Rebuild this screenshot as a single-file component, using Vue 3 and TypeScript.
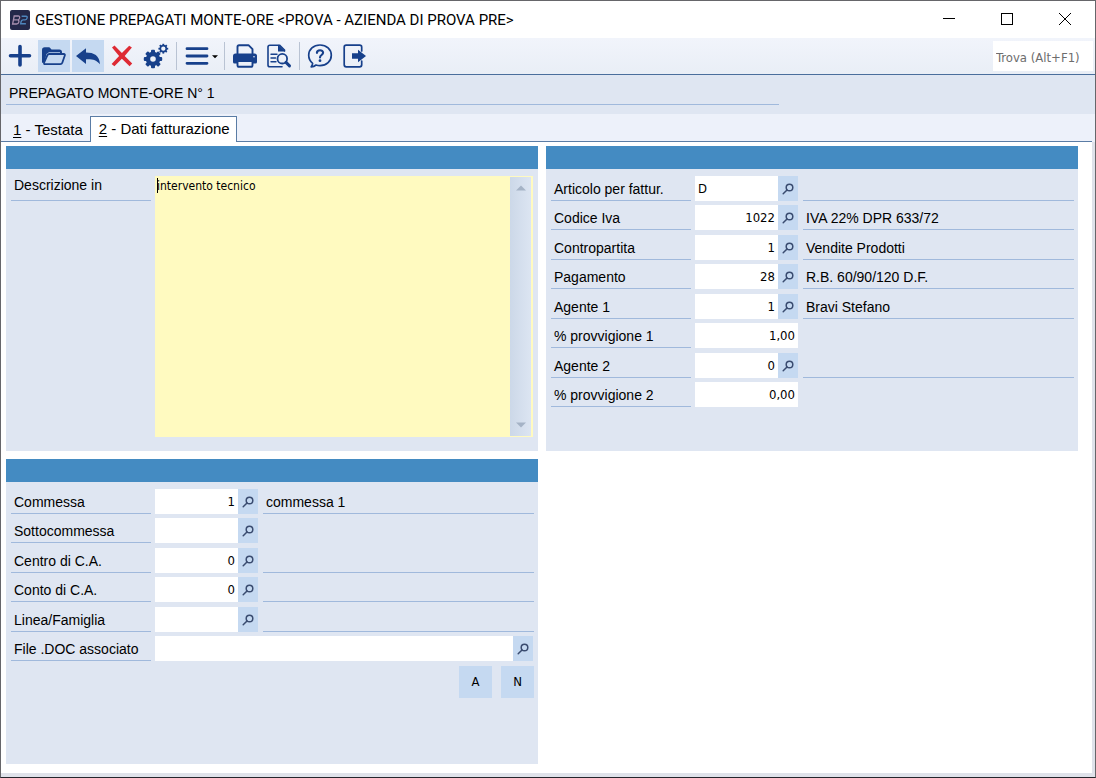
<script setup lang="ts">
import { ref } from 'vue'

interface Field {
  id: string
  label: string
  value: string
  align?: 'left' | 'right'
  lookup: boolean
  description?: string
  wide?: boolean
}

const billing = ref<Field[]>([
  { id: 'articolo', label: 'Articolo per fattur.', value: 'D', align: 'left', lookup: true, description: '' },
  { id: 'iva', label: 'Codice Iva', value: '1022', lookup: true, description: 'IVA 22% DPR 633/72' },
  { id: 'contropartita', label: 'Contropartita', value: '1', lookup: true, description: 'Vendite Prodotti' },
  { id: 'pagamento', label: 'Pagamento', value: '28', lookup: true, description: 'R.B. 60/90/120 D.F.' },
  { id: 'agente1', label: 'Agente 1', value: '1', lookup: true, description: 'Bravi Stefano' },
  { id: 'provv1', label: '% provvigione 1', value: '1,00', lookup: false },
  { id: 'agente2', label: 'Agente 2', value: '0', lookup: true, description: '' },
  { id: 'provv2', label: '% provvigione 2', value: '0,00', lookup: false },
])

const order = ref<Field[]>([
  { id: 'commessa', label: 'Commessa', value: '1', lookup: true, description: 'commessa 1' },
  { id: 'sottocommessa', label: 'Sottocommessa', value: '', lookup: true },
  { id: 'centro', label: 'Centro di C.A.', value: '0', lookup: true, description: '' },
  { id: 'conto', label: 'Conto di C.A.', value: '0', lookup: true, description: '' },
  { id: 'linea', label: 'Linea/Famiglia', value: '', lookup: true, description: '' },
  { id: 'file', label: 'File .DOC associato', value: '', align: 'left', lookup: true, wide: true },
])

const note = ref('intervento tecnico')
const search = ref('')
const teeth = [0, 45, 90, 135, 180, 225, 270, 315]
</script>

<template>
  <div class="window">
    <header class="titlebar">
      <svg class="app-icon" viewBox="0 0 20 20" aria-hidden="true">
        <rect width="20" height="20" rx="2" fill="#242849" />
        <path d="M4.2 6H8.2Q10 6 9.600 8Q9.300 9.700 7.600 9.900Q9.300 10.200 8.800 12.200Q8.400 14 6.400 14H2.600ZM4 9.900H7.400" fill="none" stroke="#a78fae" stroke-width="1.300" />
        <path d="M11.600 6.200H16Q17.500 6.200 17.100 8Q16.800 9.700 15 9.900H13Q11.400 10 11 12L10.700 13.800H15.900" fill="none" stroke="#4f86bd" stroke-width="1.400" />
      </svg>
      <h1 class="title">GESTIONE PREPAGATI MONTE-ORE &lt;PROVA - AZIENDA DI PROVA PRE&gt;</h1>
      <div class="window-buttons">
        <button type="button" aria-label="Riduci a icona">
          <svg viewBox="0 0 14 14"><path d="M1 6.500H13" /></svg>
        </button>
        <button type="button" aria-label="Ingrandisci">
          <svg viewBox="0 0 14 14"><rect x="1.500" y="1.500" width="11" height="11" /></svg>
        </button>
        <button type="button" aria-label="Chiudi">
          <svg viewBox="0 0 14 14"><path d="M1 1L13 13M13 1L1 13" /></svg>
        </button>
      </div>
    </header>

    <div class="toolbar" role="toolbar">
      <button type="button" class="tool" aria-label="Nuovo">
        <svg viewBox="0 0 32 32"><path d="M16 6.500V25M6.500 15.800H25.500" class="line" stroke-width="3.600" /></svg>
      </button>
      <button type="button" class="tool active" aria-label="Apri">
        <svg viewBox="0 0 32 32">
          <path d="M5 22V10Q5 8.300 6.700 8.300H11.200L13.200 10.600H21.300Q23 10.600 23 12.300V13.500" class="line" stroke-width="2" />
          <path d="M5 22V10Q5 8.300 6.700 8.300H11.200L13.200 10.600H21.300Q23 10.600 23 12.300H11L8.500 14L6.500 22Z" fill="#17408b" />
          <path d="M11.200 14H25.800Q27.300 14 26.800 15.500L24.300 22.800Q23.800 24.200 22.300 24.200H7.200Q5.500 24.200 6.200 22.300L9.300 15.300Q9.900 14 11.200 14Z" fill="#c5d9f1" stroke="#17408b" stroke-width="1.800" stroke-linejoin="round" />
        </svg>
      </button>
      <button type="button" class="tool active" aria-label="Annulla">
        <svg viewBox="0 0 32 32"><path d="M4 16L14 8.200V12.600C22 12.600 27.500 15.500 28 24.300C24.500 20 20.500 19 14 19.300V24Z" fill="#17408b" /></svg>
      </button>
      <button type="button" class="tool" aria-label="Elimina">
        <svg viewBox="0 0 32 32"><path d="M6 7.600L8.500 5.500L15.900 13L23.200 5.700L25.900 7.500L18.700 15.900L26.200 23.600L23.600 26.200L15.900 18.800L8.400 26.200L5.600 23.900L13.100 15.900Z" fill="#de2a33" /></svg>
      </button>
      <button type="button" class="tool" aria-label="Impostazioni">
        <svg viewBox="0 0 32 32">
          <g transform="translate(13 19)">
            <circle r="5" fill="none" stroke="#17408b" stroke-width="4.400" />
            <rect v-for="angle in teeth" :key="angle" x="-2" y="-9.200" width="4" height="4" rx="1" fill="#17408b" :transform="`rotate(${angle})`" />
          </g>
          <g transform="translate(23.300 8.700)">
            <circle r="3" fill="none" stroke="#17408b" stroke-width="1.700" />
            <rect v-for="angle in teeth" :key="angle" x="-0.900" y="-4.900" width="1.800" height="1.800" fill="#17408b" :transform="`rotate(${angle})`" />
          </g>
        </svg>
      </button>
      <span class="separator"></span>
      <button type="button" class="tool menu" aria-label="Menu">
        <svg viewBox="0 0 39 32">
          <path d="M6 8.700H26M6 16H26M6 23.300H26" class="line" stroke-width="2.800" />
          <path d="M31 15.200H37L34 18.200Z" fill="#000" />
        </svg>
      </button>
      <span class="separator"></span>
      <button type="button" class="tool" aria-label="Stampa">
        <svg viewBox="0 0 32 32">
          <path d="M8.500 14V6.800Q8.500 5.200 10.100 5.200H19.500L23.500 9.200V14" class="line" stroke-width="1.900" />
          <path d="M6.500 13.500H25.500Q28 13.500 28 16V22Q28 23.500 26.500 23.500H5.500Q4 23.500 4 22V16Q4 13.500 6.500 13.500Z" fill="#17408b" />
          <path d="M8.500 21H23.500V25.200Q23.500 26.800 21.900 26.800H10.100Q8.500 26.800 8.500 25.200Z" fill="#edf1f9" stroke="#17408b" stroke-width="1.900" />
          <circle cx="25" cy="16.800" r="0.800" fill="#edf1f9" />
        </svg>
      </button>
      <button type="button" class="tool" aria-label="Anteprima">
        <svg viewBox="0 0 32 32">
          <path d="M21.500 11V10L16.500 5.200H6.800Q5 5.200 5 7V25Q5 26.800 6.800 26.800H19" class="line" stroke-width="1.600" />
          <path d="M15 4.400L22.300 11.600H15Z" fill="#17408b" />
          <path d="M8 14.300H14M8 18H12.500M8 21.700H13" class="line" stroke-width="1.400" />
          <circle cx="19.300" cy="18.700" r="4.800" class="line" stroke-width="1.800" />
          <path d="M23 22.400L26.500 25.900" class="line" stroke-width="3" />
        </svg>
      </button>
      <span class="separator"></span>
      <button type="button" class="tool" aria-label="Aiuto">
        <svg viewBox="0 0 32 32">
          <path d="M16 5C22.500 5 27.300 9.500 27.300 15.300S22.500 25.600 16 25.600Q13.800 25.600 12 25Q10 26.700 7.200 26.900Q8.600 25.300 8.600 23.300Q4.700 20.300 4.700 15.300C4.700 9.500 9.500 5 16 5Z" class="line" stroke-width="1.700" />
          <path d="M12.900 12.900C13 9.300 19.100 9.300 19.100 12.800C19.100 15 16 15 16 17.400" class="line" stroke-width="2.100" />
          <circle cx="16" cy="20.700" r="1.400" fill="#17408b" />
        </svg>
      </button>
      <button type="button" class="tool" aria-label="Esci">
        <svg viewBox="0 0 32 32">
          <path d="M23.700 11V7.200Q23.700 5.200 21.700 5.200H8.200Q6.200 5.200 6.200 7.200V24.800Q6.200 26.800 8.200 26.800H21.700Q23.700 26.800 23.700 24.800V21" class="line" stroke-width="1.700" />
          <path d="M14 13.200H20V9.800L28 16L20 22.200V18.800H14Z" fill="#17408b" />
        </svg>
      </button>
      <input v-model="search" class="search" type="text" placeholder="Trova (Alt+F1)" aria-label="Trova" />
    </div>

    <div class="record">
      <div class="record-name">PREPAGATO MONTE-ORE N° 1</div>
    </div>

    <div class="tabs" role="tablist">
      <button type="button" class="tab" role="tab" aria-selected="false"><u>1</u> - Testata</button>
      <button type="button" class="tab selected" role="tab" aria-selected="true"><u>2</u> - Dati fatturazione</button>
      <span class="tab-rest"></span>
    </div>

    <main class="content">
      <section class="panel">
        <div class="panel-head"></div>
        <div class="panel-body">
          <div class="row note-row">
            <label class="label" for="note">Descrizione in</label>
            <div class="note">
              <textarea id="note" v-model="note" spellcheck="false"></textarea>
              <span class="caret"></span>
              <div class="scrollbar" aria-hidden="true">
                <svg viewBox="0 0 10 6"><path d="M0 5.500L5 0.500L10 5.500Z" /></svg>
                <svg viewBox="0 0 10 6"><path d="M0 0.500L5 5.500L10 0.500Z" /></svg>
              </div>
            </div>
          </div>
        </div>
      </section>

      <section class="panel">
        <div class="panel-head"></div>
        <div class="panel-body">
          <div v-for="field in billing" :key="field.id" class="row">
            <label class="label" :for="field.id">{{ field.label }}</label>
            <div class="control">
              <input :id="field.id" v-model="field.value" type="text" :class="{ start: field.align === 'left' }" />
              <button v-if="field.lookup" type="button" class="lookup" :aria-label="`Cerca ${field.label}`">
                <svg viewBox="0 0 12 12"><circle cx="7.500" cy="4.500" r="3.300" /><path d="M5 7L1.200 10.800" /></svg>
              </button>
            </div>
            <output v-if="field.description !== undefined" class="description" :for="field.id">{{ field.description }}</output>
          </div>
        </div>
      </section>

      <section class="panel order-panel">
        <div class="panel-head"></div>
        <div class="panel-body">
          <div v-for="field in order" :key="field.id" class="row" :class="{ wide: field.wide }">
            <label class="label" :for="field.id">{{ field.label }}</label>
            <div class="control">
              <input :id="field.id" v-model="field.value" type="text" :class="{ start: field.align === 'left' }" />
              <button v-if="field.lookup" type="button" class="lookup" :aria-label="`Cerca ${field.label}`">
                <svg viewBox="0 0 12 12"><circle cx="7.500" cy="4.500" r="3.300" /><path d="M5 7L1.200 10.800" /></svg>
              </button>
            </div>
            <output v-if="field.description !== undefined" class="description" :for="field.id">{{ field.description }}</output>
          </div>
          <div class="actions">
            <button type="button">A</button>
            <button type="button">N</button>
          </div>
        </div>
      </section>
    </main>
  </div>
</template>

<style>
body {
  margin: 0;
}
</style>

<style scoped>
.window {
  box-sizing: border-box;
  display: flex;
  flex-direction: column;
  min-height: 100vh;
  border: 1px solid #66666a;
  border-bottom-color: #25252b;
  background: #fff;
  color: #000;
  font: 14px/16px "Liberation Sans", Arial, sans-serif;
}

button,
input,
textarea {
  box-sizing: border-box;
  margin: 0;
  padding: 0;
  border: 0;
  border-radius: 0;
  outline: none;
  background: none;
  color: inherit;
  font: inherit;
}

svg {
  display: block;
}

.titlebar {
  display: flex;
  align-items: center;
  height: 37px;
  padding: 0 1px 0 9px;
}

.app-icon {
  width: 20px;
  height: 20px;
}

.title {
  flex: 1;
  margin: 0 0 0 5px;
  font: 400 15px/20px Roboto, "Open Sans", sans-serif;
  white-space: nowrap;
}

.window-buttons {
  display: flex;
  align-self: stretch;
}

.window-buttons button {
  display: grid;
  place-items: center;
  width: 58px;
  padding: 0 1px 1px 0;
}

.window-buttons svg {
  width: 14px;
  height: 14px;
  fill: none;
  stroke: #000;
  stroke-width: 1;
}

.toolbar {
  display: flex;
  align-items: center;
  gap: 2px;
  height: 36px;
  padding: 0 2px 0 3px;
  border-bottom: 1px solid #4a6e9c;
  background: linear-gradient(#f1f4fb, #e9eef6);
}

.tool {
  width: 32px;
  height: 32px;
}

.tool.menu {
  width: 39px;
}

.tool.active {
  background: #c5d9f1;
}

.tool svg {
  width: 100%;
  height: 100%;
}

.line {
  fill: none;
  stroke: #17408b;
  stroke-linecap: round;
  stroke-linejoin: round;
}

.separator {
  width: 1px;
  height: 28px;
  margin: 0 2px;
  background: #b9c3d3;
}

.search {
  width: 100px;
  height: 30px;
  margin-left: auto;
  padding: 2px 3px 0;
  background: #fff;
  font: 13px/16px "DejaVu Sans Condensed", "DejaVu Sans", sans-serif;
}

.search::placeholder {
  color: #6d6d6d;
  opacity: 1;
}

.record {
  height: 39px;
  padding-left: 5px;
  background: #dfe6f2;
}

.record-name {
  box-sizing: border-box;
  width: 71%;
  height: 30px;
  padding: 10px 3px 0;
  border-bottom: 1px solid #a0b9dc;
}

.tabs {
  display: flex;
  align-items: stretch;
  height: 28px;
  padding-right: 3px;
  background: #edf1fa;
  font-size: 15px;
}

.tab {
  padding: 4px 7px 0 12px;
  border-bottom: 1px solid #5a7ca5;
}

.tab.selected {
  margin-top: 2px;
  padding: 0 6px 2px 8px;
  border: 1px solid #5a7ca5;
  border-bottom: 0;
  background: #fff;
}

.tab u {
  text-underline-offset: 2px;
}

.tab-rest {
  flex: 1;
  border-bottom: 1px solid #5a7ca5;
}

.content {
  flex: 1;
  display: grid;
  grid-template-columns: 1fr 1fr;
  gap: 8px;
  align-content: start;
  padding: 4px 14px 9px 5px;
  border: solid #dfe2ea;
  border-width: 0 3px 4px 0;
}

.panel {
  background: #dfe6f2;
}

.panel-head {
  height: 23px;
  background: #448bc2;
}

.panel-body {
  padding: 7px 4px 14px 5px;
}

.order-panel .panel-body {
  padding-bottom: 66px;
}

.row {
  display: grid;
  grid-template-columns: 140px 103px 1fr;
  column-gap: 4px;
  margin-bottom: 4px;
}

.row:nth-child(even) {
  margin-bottom: 5px;
}

.row:last-child {
  margin-bottom: 0;
}

.row.wide,
.row.note-row {
  grid-template-columns: 140px 1fr;
  padding-right: 1px;
}

.label,
.description {
  box-sizing: border-box;
  height: 25px;
  padding: 5px 3px 0;
  border-bottom: 1px solid #a0b9dc;
  white-space: nowrap;
}

.note-row .label {
  padding-top: 1px;
}

.description {
  display: block;
  margin-left: 1px;
}

.control {
  display: flex;
  height: 25px;
}

.control input {
  flex: 1;
  min-width: 0;
  padding: 0 3px;
  background: #fff;
  font: 13px/16px "DejaVu Sans Condensed", "DejaVu Sans", sans-serif;
  text-align: right;
}

.control input.start {
  text-align: left;
}

.lookup {
  display: grid;
  place-items: center;
  width: 20px;
  background: #c5d9f1;
}

.lookup svg {
  width: 12px;
  height: 12px;
  fill: none;
  stroke: #3a4c70;
  stroke-width: 1.5;
  stroke-linecap: round;
}

.note {
  position: relative;
  display: flex;
  height: 261px;
  padding: 1px 2px 1px 0;
  box-sizing: border-box;
  background: #fffac0;
}

.note textarea {
  flex: 1;
  min-width: 0;
  padding: 1px 2px;
  resize: none;
  overflow: hidden;
  font: 12px/16px "DejaVu Sans Condensed", "DejaVu Sans", sans-serif;
}

.caret {
  position: absolute;
  top: 2px;
  left: 2px;
  width: 1px;
  height: 15px;
  background: #000;
}

.scrollbar {
  display: flex;
  flex-direction: column;
  align-items: center;
  justify-content: space-between;
  box-sizing: border-box;
  width: 21px;
  padding: 8px 0;
  background: linear-gradient(90deg, #ccd8e8, #dce5f2);
}

.scrollbar svg {
  width: 10px;
  height: 6px;
  fill: #a5b3c6;
}

.actions {
  display: flex;
  justify-content: flex-end;
  gap: 9px;
}

.actions button {
  width: 33px;
  height: 32px;
  background: #c5d9f1;
  font: 13px/16px "DejaVu Sans Condensed", "DejaVu Sans", sans-serif;
}
</style>
